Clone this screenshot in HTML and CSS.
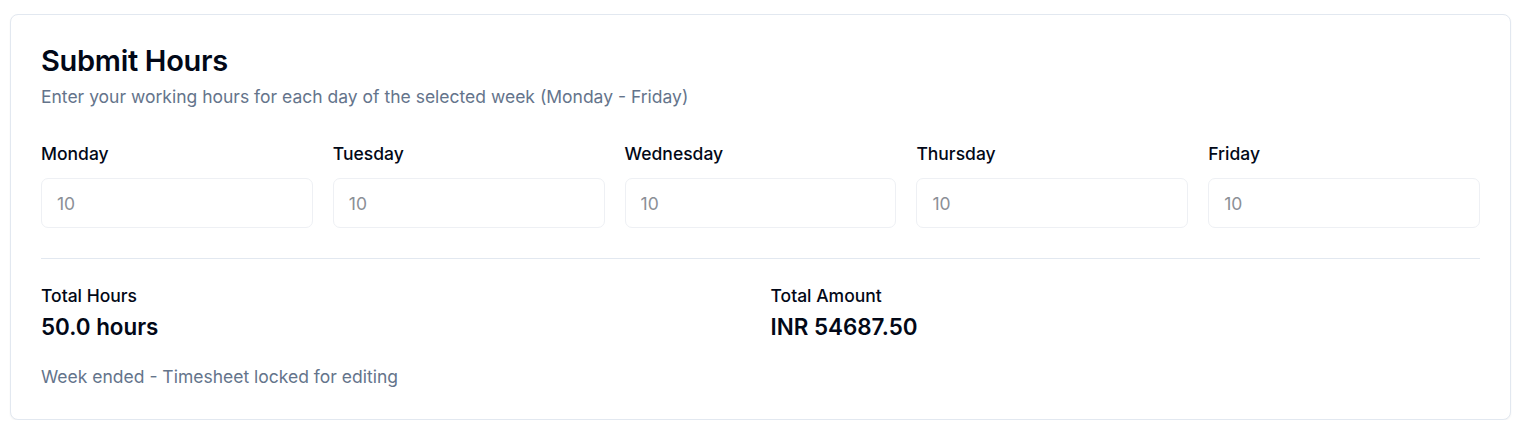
FILE: index.html
```html
<!DOCTYPE html>
<html>
<head>
<meta charset="utf-8">
<link rel="stylesheet" href="styles.css">
</head>
<body>
<div class="card">
  <div class="header">
    <h2 class="title">Submit Hours</h2>
    <p class="subtitle">Enter your working hours for each day of the selected week (Monday - Friday)</p>
  </div>
  <div class="days">
    <div class="day"><label class="day-label">Monday</label><input class="day-input" value="10" disabled></div>
    <div class="day"><label class="day-label">Tuesday</label><input class="day-input" value="10" disabled></div>
    <div class="day"><label class="day-label">Wednesday</label><input class="day-input" value="10" disabled></div>
    <div class="day"><label class="day-label">Thursday</label><input class="day-input" value="10" disabled></div>
    <div class="day"><label class="day-label">Friday</label><input class="day-input" value="10" disabled></div>
  </div>
  <div class="divider"></div>
  <div class="totals">
    <div class="total">
      <div class="total-label">Total Hours</div>
      <div class="total-value">50.0 hours</div>
    </div>
    <div class="total">
      <div class="total-label">Total Amount</div>
      <div class="total-value">INR 54687.50</div>
    </div>
  </div>
  <p class="note">Week ended - Timesheet locked for editing</p>
</div>
</body>
</html>
```
FILE: styles.css
```css
* { box-sizing: border-box; }
html, body { margin: 0; padding: 0; background: #ffffff; }
body {
  font-family: Inter, "Noto Sans", sans-serif;
  color: #020817;
  padding: 14px 17px 0 10px;
}
.card {
  border: 1px solid #e2e8f0;
  border-radius: 8px;
  box-shadow: 0 1px 2px rgba(0,0,0,0.05);
  padding: 28px 30px 29px 30px;
  background: #fff;
}
.title {
  margin: 0;
  font-size: 29px;
  font-weight: 600;
  line-height: 36px;
  letter-spacing: -0.3px;
}
.subtitle {
  margin: 5px 0 0;
  font-size: 17.5px;
  line-height: 26px;
  color: #64748b;
}
.days {
  display: grid;
  grid-template-columns: repeat(5, minmax(0, 1fr));
  gap: 20px;
  margin-top: 31px;
}
.day { display: flex; flex-direction: column; gap: 11px; min-width: 0; }
.day-label { font-size: 17.5px; font-weight: 500; line-height: 26px; }
.day-input {
  width: 100%;
  min-width: 0;
  height: 50px;
  border: 1px solid #eef0f4;
  border-radius: 7px;
  padding: 0 15px;
  font-family: inherit;
  font-size: 17.5px;
  color: #8b8f96;
  background: #fff;
}
.divider { height: 1px; background: #e2e8f0; margin: 30px 0 24px; }
.totals {
  display: grid;
  grid-template-columns: minmax(0, 1fr) minmax(0, 1fr);
  gap: 20px;
}
.total-label { font-size: 17.5px; font-weight: 500; line-height: 26px; }
.total-value { font-size: 22.4px; font-weight: 600; line-height: 30px; margin-top: 3px; }
.note {
  margin: 22px 0 0;
  font-size: 17.5px;
  line-height: 26px;
  color: #64748b;
}
```
